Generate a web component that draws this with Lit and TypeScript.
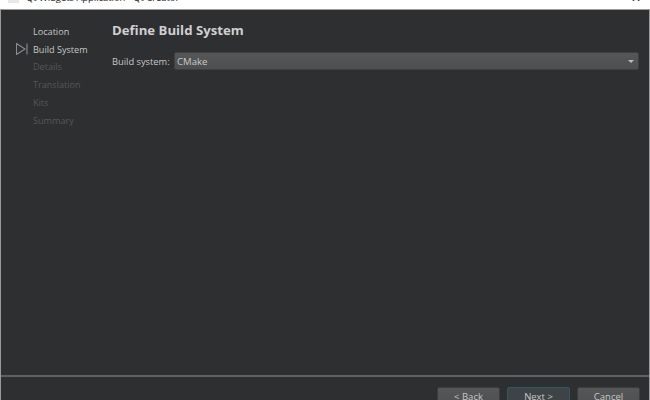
import { LitElement, html, css } from "lit";
import { customElement } from "lit/decorators.js";

@customElement("app-root")
export class AppRoot extends LitElement {
  static styles = css`
    :host { display: flex; flex-direction: column; width: 650px; height: 400px; overflow: hidden; font-family: "Open Sans", "Noto Sans", sans-serif; background: #2e2f30; color: #c8c8c8; }
    .titlebar { height: 9px; flex: none; background: #fff; display: flex; align-items: flex-end; overflow: hidden; color: #222; font-size: 9.4px; line-height: 14px; }
    .tb-inner { display: flex; align-items: flex-end; margin-left: 8px; margin-bottom: 4px; flex: none; }
    .app-icon { width: 11px; height: 11px; background: #e9e9e9; flex: none; margin-right: 7px; margin-bottom: 2px; }
    .close { margin-left: auto; margin-right: 9px; margin-bottom: 5px; font-size: 12px; line-height: 12px; }
    .window { flex: 1; display: flex; flex-direction: column; border-left: 1px solid #9a9a9a; border-right: 1px solid #9a9a9a; border-top: 1px solid #9c9c9c; min-height: 0; }
    .main { flex: 1; display: flex; min-height: 0; }
    .side { width: 111px; flex: none; padding-top: 12.5px; box-sizing: border-box; font-size: 9.1px; }
    .step { height: 17.8px; display: flex; align-items: center; padding-left: 32px; position: relative; white-space: nowrap; }
    .step.dim { color: #55575a; }
    .step svg { position: absolute; left: 15px; top: 2.5px; }
    .content { flex: 1; padding: 11px 10px 0 0; min-width: 0; }
    h1 { margin: 0; font-size: 13.2px; line-height: 19px; font-weight: 700; color: #d0d0d0; }
    .row { display: flex; align-items: center; margin-top: 12px; font-size: 9.3px; }
    .label { width: 62px; flex: none; white-space: nowrap; }
    .combo { flex: 1; height: 18px; box-sizing: border-box; display: flex; align-items: center; padding: 0 4px 0 2px; border-radius: 2px; background: linear-gradient(#555657, #4d4e4f); border: 1px solid #3e3f40; justify-content: space-between; font-size: 9.6px; }
    .arrow { width: 0; height: 0; border-left: 3px solid transparent; border-right: 3px solid transparent; border-top: 3px solid #bdbdbd; }
    .rule { height: 2px; flex: none; background: #5f6061; }
    .footer { height: 23px; flex: none; display: flex; justify-content: flex-end; gap: 7px; padding: 10px 9px 0 0; box-sizing: border-box; overflow: hidden; }
    .btn { width: 63px; height: 24px; flex: none; box-sizing: border-box; background: linear-gradient(#555657, #4d4e4f); border: 1px solid #3c3d3e; border-radius: 2px; font-size: 9.5px; color: #c8c8c8; text-align: center; line-height: 18px; font-family: inherit; padding: 0 0 4px; }
    .btn.primary { background: #3d4346; border-color: #2f5a64; }
  `;

  render() {
    return html`
      <div class="titlebar">
        <div class="tb-inner">
          <div class="app-icon"></div>
          <span>Qt Widgets Application - Qt Creator</span>
        </div>
        <span class="close">✕</span>
      </div>
      <div class="window">
        <div class="main">
          <div class="side">
            <div class="step">Location</div>
            <div class="step">
              <svg width="13" height="12" viewBox="0 0 13 12" fill="none" stroke="#8c8c8c" stroke-width="1.1"><path d="M0.5 0.5 L9 6 L0.5 11.5 Z"/><path d="M11 0.5 V11.5"/></svg>
              Build System
            </div>
            <div class="step dim">Details</div>
            <div class="step dim">Translation</div>
            <div class="step dim">Kits</div>
            <div class="step dim">Summary</div>
          </div>
          <div class="content">
            <h1>Define Build System</h1>
            <div class="row">
              <span class="label">Build system:</span>
              <div class="combo"><span>CMake</span><span class="arrow"></span></div>
            </div>
          </div>
        </div>
        <div class="rule"></div>
        <div class="footer">
          <button class="btn">&lt; Back</button>
          <button class="btn primary">Next &gt;</button>
          <button class="btn">Cancel</button>
        </div>
      </div>
    `;
  }
}
